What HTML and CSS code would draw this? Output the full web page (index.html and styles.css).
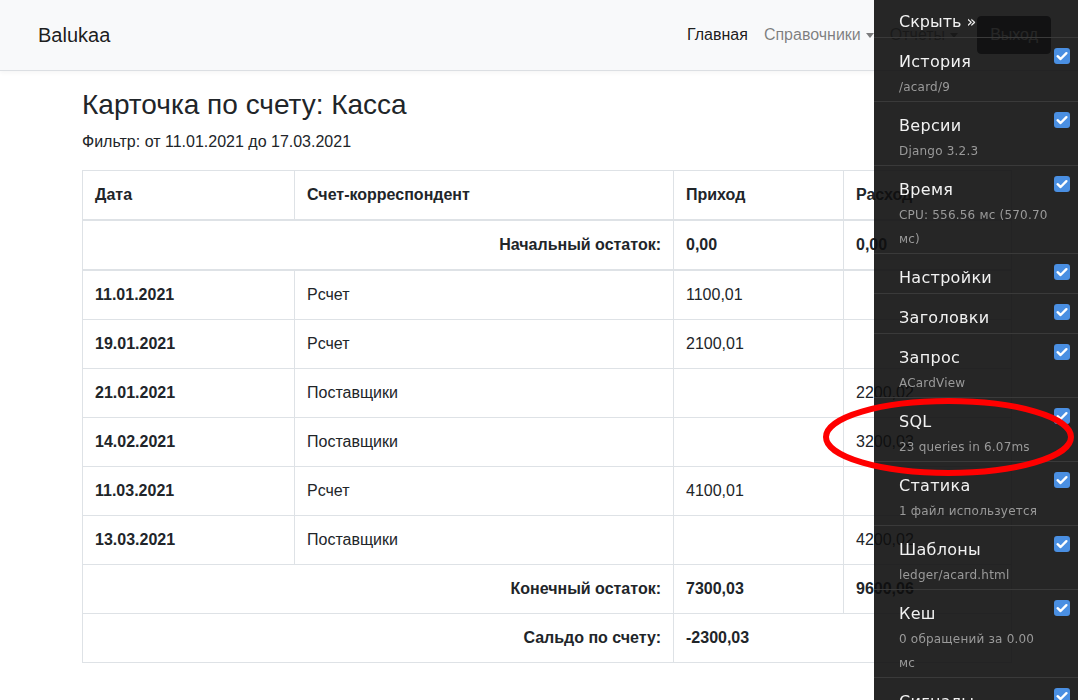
FILE: index.html
```html
<!DOCTYPE html>
<html lang="ru">
<head>
<meta charset="utf-8">
<title>Карточка по счету: Касса</title>
<link rel="stylesheet" href="styles.css">
</head>
<body>
<nav class="navbar">
  <a class="brand" href="#">Balukaa</a>
  <ul class="nav">
    <li><a class="nav-link active" href="#">Главная</a></li>
    <li><a class="nav-link dropdown" href="#">Справочники</a></li>
    <li><a class="nav-link dropdown" href="#">Отчеты</a></li>
  </ul>
  <a class="btn-exit" href="#">Выход</a>
</nav>

<main class="container">
  <h3 class="title">Карточка по счету: Касса</h3>
  <p class="filter">Фильтр: от 11.01.2021 до 17.03.2021</p>
  <table class="ledger">
    <colgroup>
      <col class="c-date"><col class="c-acc"><col class="c-in"><col class="c-out">
    </colgroup>
    <thead>
      <tr><th>Дата</th><th>Счет-корреспондент</th><th>Приход</th><th>Расход</th></tr>
    </thead>
    <tbody>
      <tr><th colspan="2" class="right">Начальный остаток:</th><th>0,00</th><th>0,00</th></tr>
    </tbody>
    <tbody>
      <tr><th>11.01.2021</th><td>Рсчет</td><td>1100,01</td><td></td></tr>
      <tr><th>19.01.2021</th><td>Рсчет</td><td>2100,01</td><td></td></tr>
      <tr><th>21.01.2021</th><td>Поставщики</td><td></td><td>2200,02</td></tr>
      <tr><th>14.02.2021</th><td>Поставщики</td><td></td><td>3200,03</td></tr>
      <tr><th>11.03.2021</th><td>Рсчет</td><td>4100,01</td><td></td></tr>
      <tr><th>13.03.2021</th><td>Поставщики</td><td></td><td>4200,02</td></tr>
      <tr><th colspan="2" class="right">Конечный остаток:</th><th>7300,03</th><th>9600,06</th></tr>
      <tr><th colspan="2" class="right">Сальдо по счету:</th><th colspan="2">-2300,03</th></tr>
    </tbody>
  </table>
</main>

<aside class="djdt">
  <div class="djdt-hide">Скрыть »</div>
  <ul class="djdt-panels">
    <li><span class="djdt-title">История</span><small>/acard/9</small><span class="chk"><svg viewBox="0 0 16 16" width="16" height="16"><path d="M3.6 8.2 L6.6 11 L12.4 5.2" fill="none" stroke="#fff" stroke-width="2.4" stroke-linecap="round" stroke-linejoin="round"/></svg></span></li>
    <li><span class="djdt-title">Версии</span><small>Django 3.2.3</small><span class="chk"><svg viewBox="0 0 16 16" width="16" height="16"><path d="M3.6 8.2 L6.6 11 L12.4 5.2" fill="none" stroke="#fff" stroke-width="2.4" stroke-linecap="round" stroke-linejoin="round"/></svg></span></li>
    <li><span class="djdt-title">Время</span><small>CPU: 556.56 мс (570.70 мс)</small><span class="chk"><svg viewBox="0 0 16 16" width="16" height="16"><path d="M3.6 8.2 L6.6 11 L12.4 5.2" fill="none" stroke="#fff" stroke-width="2.4" stroke-linecap="round" stroke-linejoin="round"/></svg></span></li>
    <li><span class="djdt-title">Настройки</span><span class="chk"><svg viewBox="0 0 16 16" width="16" height="16"><path d="M3.6 8.2 L6.6 11 L12.4 5.2" fill="none" stroke="#fff" stroke-width="2.4" stroke-linecap="round" stroke-linejoin="round"/></svg></span></li>
    <li><span class="djdt-title">Заголовки</span><span class="chk"><svg viewBox="0 0 16 16" width="16" height="16"><path d="M3.6 8.2 L6.6 11 L12.4 5.2" fill="none" stroke="#fff" stroke-width="2.4" stroke-linecap="round" stroke-linejoin="round"/></svg></span></li>
    <li><span class="djdt-title">Запрос</span><small>ACardView</small><span class="chk"><svg viewBox="0 0 16 16" width="16" height="16"><path d="M3.6 8.2 L6.6 11 L12.4 5.2" fill="none" stroke="#fff" stroke-width="2.4" stroke-linecap="round" stroke-linejoin="round"/></svg></span></li>
    <li><span class="djdt-title">SQL</span><small>23 queries in 6.07ms</small><span class="chk"><svg viewBox="0 0 16 16" width="16" height="16"><path d="M3.6 8.2 L6.6 11 L12.4 5.2" fill="none" stroke="#fff" stroke-width="2.4" stroke-linecap="round" stroke-linejoin="round"/></svg></span></li>
    <li><span class="djdt-title">Статика</span><small>1 файл используется</small><span class="chk"><svg viewBox="0 0 16 16" width="16" height="16"><path d="M3.6 8.2 L6.6 11 L12.4 5.2" fill="none" stroke="#fff" stroke-width="2.4" stroke-linecap="round" stroke-linejoin="round"/></svg></span></li>
    <li><span class="djdt-title">Шаблоны</span><small>ledger/acard.html</small><span class="chk"><svg viewBox="0 0 16 16" width="16" height="16"><path d="M3.6 8.2 L6.6 11 L12.4 5.2" fill="none" stroke="#fff" stroke-width="2.4" stroke-linecap="round" stroke-linejoin="round"/></svg></span></li>
    <li><span class="djdt-title">Кеш</span><small>0 обращений за 0.00 мс</small><span class="chk"><svg viewBox="0 0 16 16" width="16" height="16"><path d="M3.6 8.2 L6.6 11 L12.4 5.2" fill="none" stroke="#fff" stroke-width="2.4" stroke-linecap="round" stroke-linejoin="round"/></svg></span></li>
    <li><span class="djdt-title">Сигналы</span><small>30 получателей 12 сигналов</small><span class="chk"><svg viewBox="0 0 16 16" width="16" height="16"><path d="M3.6 8.2 L6.6 11 L12.4 5.2" fill="none" stroke="#fff" stroke-width="2.4" stroke-linecap="round" stroke-linejoin="round"/></svg></span></li>
  </ul>
</aside>

<svg class="annotation" width="258" height="90" viewBox="0 0 258 90">
  <ellipse cx="130.5" cy="44" rx="122.5" ry="36" fill="none" stroke="#ff0000" stroke-width="6"/>
</svg>
</body>
</html>
```

FILE: styles.css
```css
html, body {
  margin: 0;
  padding: 0;
  overflow: hidden;
  height: 100%;
}
body {
  font-family: "Liberation Sans", Arial, sans-serif;
  font-size: 16px;
  line-height: 1.5;
  color: #212529;
  background: #fff;
}
a { text-decoration: none; }

/* Navbar */
.navbar {
  display: flex;
  align-items: center;
  height: 70px;
  padding: 0 27px 0 38px;
  background: #f8f9fa;
  border-bottom: 1px solid #dcdfe3;
  box-shadow: 0 2px 4px rgba(0, 0, 0, 0.04);
}
.brand {
  font-size: 20px;
  line-height: 30px;
  color: rgba(0, 0, 0, 0.9);
}
.nav {
  display: flex;
  list-style: none;
  margin: 0 0 0 auto;
  padding: 0;
}
.nav-link {
  display: flex;
  align-items: center;
  padding: 8px;
  color: rgba(0, 0, 0, 0.5);
}
.nav-link.active { color: rgba(0, 0, 0, 0.9); }
.nav-link.dropdown::after {
  content: "";
  margin-left: 5px;
  border-top: 5px solid;
  border-left: 4px solid transparent;
  border-right: 4px solid transparent;
}
.btn-exit {
  margin-left: 11px;
  padding: 6px 12px;
  border: 1px solid #343a40;
  border-radius: 4px;
  background: #343a40;
  color: #fff;
  line-height: 24px;
}

/* Content */
.container {
  padding: 17px 0 0 82px;
}
.title {
  margin: 0 0 8px;
  font-size: 28px;
  font-weight: 500;
  line-height: 1.2;
}
.filter {
  margin: 0 0 16px;
}
.ledger {
  width: 929px;
  table-layout: fixed;
  border-collapse: collapse;
}
.c-date { width: 212px; }
.c-acc { width: 379px; }
.c-in { width: 170px; }
.c-out { width: 168px; }
.ledger th, .ledger td {
  padding: 12px;
  border: 1px solid #dee2e6;
  text-align: left;
  vertical-align: top;
  line-height: 24px;
}
.ledger th { font-weight: 700; }
.ledger thead th {
  border-bottom-width: 2px;
  vertical-align: bottom;
}
.ledger tbody + tbody { border-top: 2px solid #dee2e6; }
.ledger .right { text-align: right; }

/* Debug toolbar */
.djdt {
  position: fixed;
  top: 0;
  right: 0;
  width: 204px;
  height: 100%;
  overflow: hidden;
  background: rgba(14, 14, 14, 0.9);
  font-family: "DejaVu Sans", sans-serif;
  color: #f2f2f2;
}
.djdt-hide {
  padding: 10px 0 3px 25px;
  font-size: 16px;
  line-height: 24px;
  border-bottom: 1px solid #3a3a3a;
}
.djdt-panels {
  list-style: none;
  margin: 0;
  padding: 0;
}
.djdt-panels li {
  position: relative;
  display: flex;
  flex-direction: column;
  padding: 11px 28px 3px 25px;
  border-bottom: 1px solid #3a3a3a;
}
.djdt-title {
  font-size: 16px;
  line-height: 25px;
  letter-spacing: 0.3px;
}
.djdt-panels small {
  margin: 1px 0 -1px;
  font-size: 12px;
  line-height: 24px;
  color: #9a9a9a;
  letter-spacing: 0.2px;
}
.chk {
  position: absolute;
  top: 10px;
  right: 8px;
  width: 16px;
  height: 16px;
  border-radius: 3px;
  background: #4a8fe2;
}
.chk svg { display: block; }

/* Annotation */
.annotation {
  position: absolute;
  left: 818px;
  top: 393px;
}
```
